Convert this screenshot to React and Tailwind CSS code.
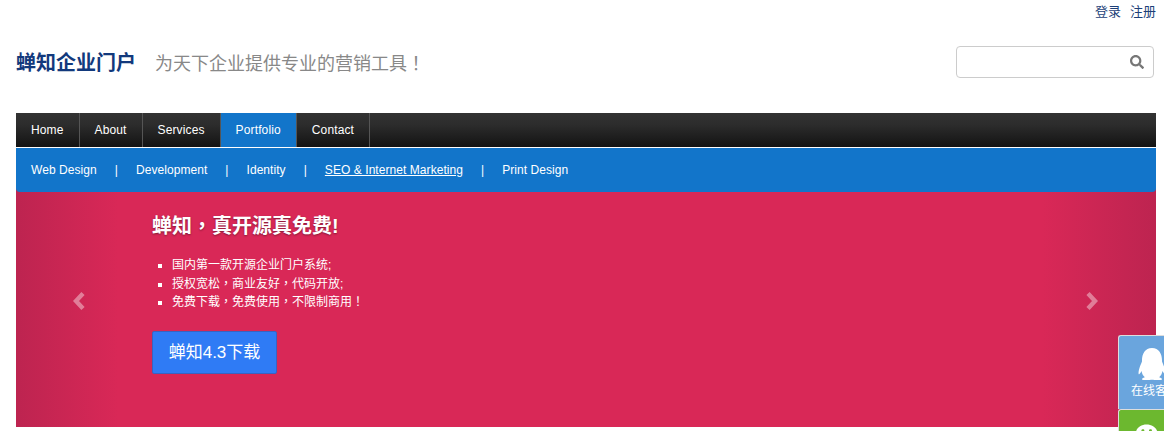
import React from "react";
import { FaSearch, FaQq, FaWeixin } from "react-icons/fa";

const NAV = ["Home", "About", "Services", "Portfolio", "Contact"];
const SUB = ["Web Design", "Development", "Identity", "SEO & Internet Marketing", "Print Design"];

const P = ({ children }) => <span className="font-['Noto_Sans_CJK_TC',sans-serif]">{children}</span>;

const Chevron = ({ points, className }) => (
  <svg viewBox="0 0 14 20" className={className} fill="none" stroke="white" strokeWidth="4.4" strokeLinejoin="miter">
    <polyline points={points} />
  </svg>
);

export default function App() {
  return (
    <div className="relative h-[431px] w-[1164px] overflow-hidden bg-white pl-4 pr-2 font-['Liberation_Sans','Noto_Sans_CJK_SC',sans-serif]">
      <div className="flex h-[23px] items-center justify-end gap-[9px] text-[13px] leading-none text-[#1c3f78]">
        <a>登录</a>
        <a>注册</a>
      </div>
      <header className="flex h-[78px] items-center justify-between pr-[2px]">
        <div className="mt-[2px] flex items-center gap-[19px]">
          <h1 className="text-[20px] leading-none font-bold text-[#12397c]">蝉知企业门户</h1>
          <p className="text-[18px] leading-none text-[#888888]">为天下企业提供专业的营销工具<P>！</P></p>
        </div>
        <div className="flex h-8 w-[198px] items-center justify-end rounded border border-[#cccccc] pr-[9px]">
          <FaSearch className="size-[14px] text-[#777777]" />
        </div>
      </header>
      <div className="mt-3">
        <nav className="flex h-[35px] border-b border-white bg-[linear-gradient(#333333,#2c2c2c_35%,#131313)] text-[12px] tracking-[0.13px] text-white">
          {NAV.map((item) => (
            <a
              key={item}
              className={
                item === "Portfolio"
                  ? "flex items-center border-r border-[#555555] bg-[#1275ca] px-[15px]"
                  : "flex items-center border-r border-[#555555] px-[15px]"
              }
            >
              {item}
            </a>
          ))}
        </nav>
        <div className="h-[279px] bg-[linear-gradient(90deg,#bd2450,#d92857_9%,#d92857_90%,#bd2450)]">
          <div className="flex h-11 items-center gap-[18px] rounded-b-[4px] bg-[#1275ca] pl-[15px] text-[12px] tracking-[0.06px] text-white">
            {SUB.map((item, i) => (
              <React.Fragment key={item}>
                {i > 0 && <span>|</span>}
                <a className={item.startsWith("SEO") ? "underline" : ""}>{item}</a>
              </React.Fragment>
            ))}
          </div>
          <div className="relative h-[235px] pt-[21px] pl-[136px] text-white">
            <Chevron points="11,2.5 4,10 11,17.5" className="absolute top-[99px] left-[56px] h-5 w-[14px] opacity-40" />
            <Chevron points="3,2.5 10,10 3,17.5" className="absolute top-[99px] right-[57px] h-5 w-[14px] opacity-40" />
            <h3 className="h-6 text-[20px] leading-[24px] font-bold [text-shadow:0_1px_2px_rgba(0,0,0,0.4)]">蝉知<P>，</P>真开源真免费!</h3>
            <ul className="mt-[19px] list-[square] pl-[20px] text-[12px] leading-[18px]">
              <li className="h-[18px]">国内第一款开源企业门户系统;</li>
              <li className="h-[18px]">授权宽松<P>，</P>商业友好<P>，</P>代码开放;</li>
              <li className="h-[18px]">免费下载<P>，</P>免费使用<P>，</P>不限制商用<P>！</P></li>
            </ul>
            <a className="mt-[21px] flex h-[43px] w-[125px] items-center justify-center rounded-[2px] border border-[#3a62c0] bg-[#2f7bf5] text-[17px]">
              蝉知4.3下载
            </a>
          </div>
        </div>
      </div>
      <div className="absolute top-[335px] left-[1118px] w-[74px] text-white">
        <div className="flex h-[74px] flex-col items-start rounded-t-[3px] border-t border-l border-[#dddddd] bg-[#6aa5dd] pt-[12px]">
          <FaQq className="ml-[17px] size-[32px]" />
          <span className="mt-[3px] ml-[12px] text-[12px] leading-[16px]">在线客服</span>
        </div>
        <div className="flex h-[74px] flex-col items-start rounded-t-[3px] border-t border-l border-[#dddddd] bg-[#6cb82f] pt-[11px]">
          <FaWeixin className="ml-[16px] size-[32px]" />
        </div>
      </div>
    </div>
  );
}
